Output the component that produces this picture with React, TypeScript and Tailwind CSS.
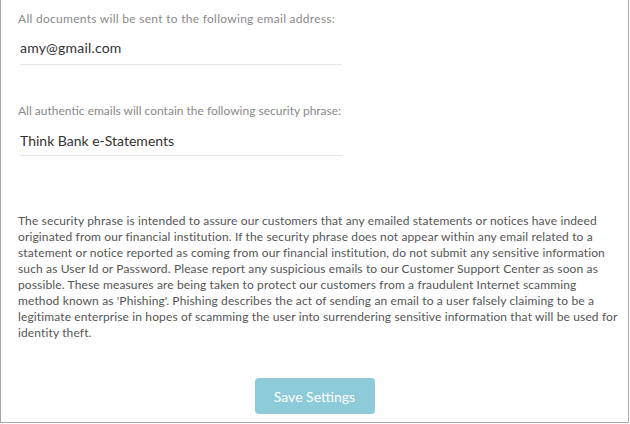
import React from "react";

export default function App() {
  const font = { fontFamily: "Lato, 'Open Sans', sans-serif" };
  return (
    <div className="w-[630px] h-[424px] bg-white" style={font}>
      <div className="w-[629px] h-[423px] border-l border-r border-b border-[#a9a9a9] pl-[17px] pr-[14px] pt-[11px] flex flex-col">
        <div className="text-[12px] leading-[16px] text-[#8a8a8a] tracking-[0.28px]">All documents will be sent to the following email address:</div>
        <div className="ml-[2px] mt-[12px] w-[322px] border-b border-[#e6e6e6] pb-[7px] text-[14px] leading-[18px] text-[#333] tracking-[0.2px]">amy@gmail.com</div>
        <div className="mt-[38px] text-[12px] leading-[16px] text-[#8a8a8a]">All authentic emails will contain the following security phrase:</div>
        <div className="ml-[2px] mt-[13px] w-[322px] border-b border-[#e6e6e6] pb-[5px] text-[14px] leading-[18px] text-[#333]">Think Bank e-Statements</div>
        <p className="mt-[57px] text-[12px] leading-[16px] text-[#555] tracking-[0.13px] whitespace-nowrap">
          The security phrase is intended to assure our customers that any emailed statements or notices have indeed<br />
          originated from our financial institution. If the security phrase does not appear within any email related to a<br />
          statement or notice reported as coming from our financial institution, do not submit any sensitive information<br />
          such as User Id or Password. Please report any suspicious emails to our Customer Support Center as soon as<br />
          possible. These measures are being taken to protect our customers from a fraudulent Internet scamming<br />
          method known as 'Phishing'. Phishing describes the act of sending an email to a user falsely claiming to be a<br />
          legitimate enterprise in hopes of scamming the user into surrendering sensitive information that will be used for<br />
          identity theft.
        </p>
        <div className="mt-[37px] flex justify-center pr-[3px]">
          <button className="w-[120px] h-[36px] rounded-[4px] bg-[#8ecbd9] text-white text-[14px]">Save Settings</button>
        </div>
      </div>
    </div>
  );
}
